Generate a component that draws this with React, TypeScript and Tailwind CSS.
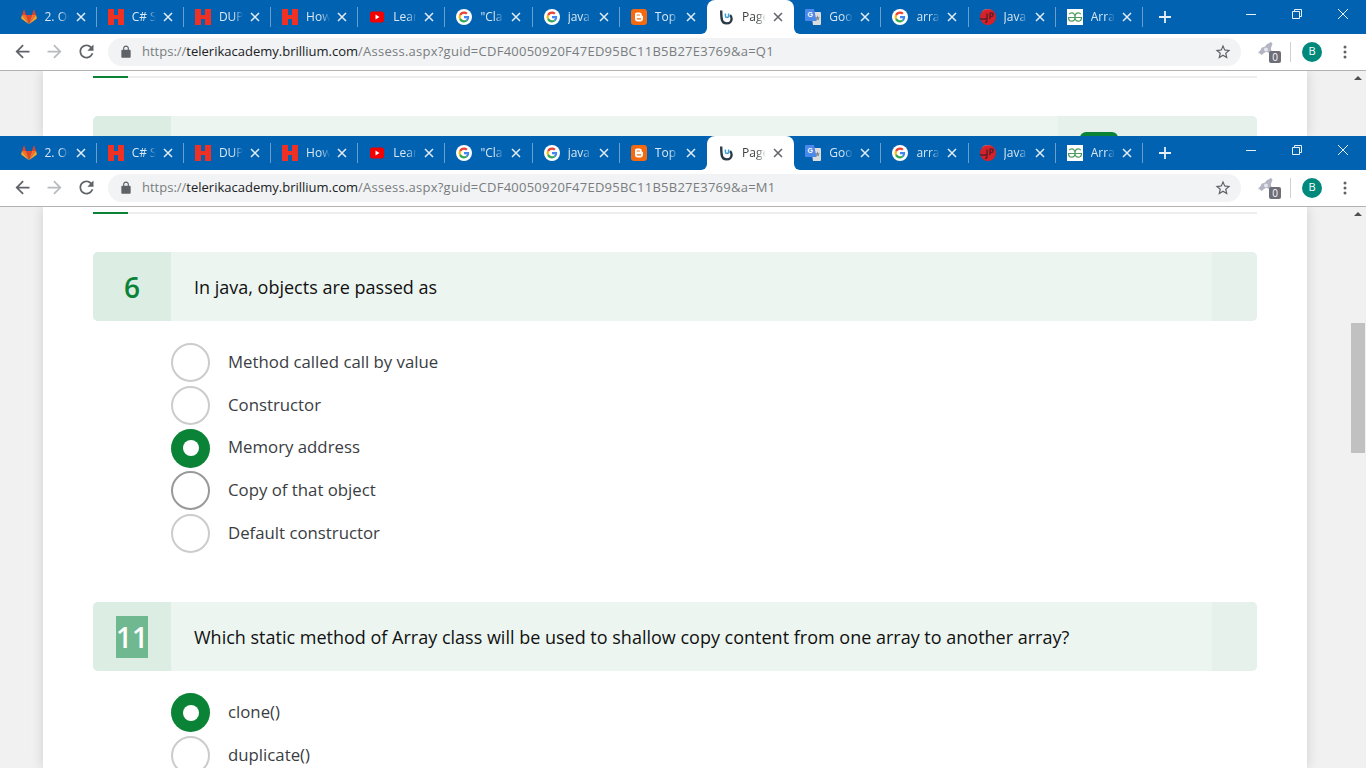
import type { ReactNode } from 'react';

type FaviconKind = 'gitlab' | 'h' | 'youtube' | 'google' | 'blogger' | 'brillium' | 'translate' | 'java' | 'gfg';

const tabs: { title: string; icon: FaviconKind; active?: boolean; noSep?: boolean }[] = [
  { title: '2. OC', icon: 'gitlab' },
  { title: 'C# S', icon: 'h' },
  { title: 'DUP', icon: 'h' },
  { title: 'How', icon: 'h' },
  { title: 'Lear', icon: 'youtube' },
  { title: '"Cla', icon: 'google' },
  { title: 'java', icon: 'google' },
  { title: 'Top', icon: 'blogger', noSep: true },
  { title: 'Page', icon: 'brillium', active: true, noSep: true },
  { title: 'Goo', icon: 'translate' },
  { title: 'arra', icon: 'google' },
  { title: 'Java', icon: 'java' },
  { title: 'Arra', icon: 'gfg' },
];

function Favicon({ kind }: { kind: FaviconKind }) {
  if (kind === 'gitlab') {
    return (
      <svg width="16" height="16" viewBox="0 0 16 16" className="shrink-0">
        <path d="M8 15.2 11 6H5z" fill="#e24329" />
        <path d="M8 15.2 5 6H1z" fill="#fc6d26" />
        <path d="M1 6 .2 9c-.1.3 0 .6.2.7L8 15.2z" fill="#fca326" />
        <path d="M1 6h4L3.3.8c-.1-.3-.4-.3-.5 0z" fill="#e24329" />
        <path d="M8 15.2 11 6h4z" fill="#fc6d26" />
        <path d="M15 6l.8 3c.1.3 0 .6-.2.7L8 15.2z" fill="#fca326" />
        <path d="M15 6h-4l1.7-5.2c.1-.3.4-.3.5 0z" fill="#e24329" />
      </svg>
    );
  }
  if (kind === 'h') {
    return (
      <svg width="16" height="16" viewBox="0 0 16 16" className="shrink-0">
        <path d="M0 0h6v6h4V0h6v16h-6V10H6v6H0z" fill="#ee3124" />
      </svg>
    );
  }
  if (kind === 'youtube') {
    return (
      <svg width="16" height="16" viewBox="0 0 16 16" className="shrink-0">
        <rect x="1" y="2.500" width="14" height="11" rx="2.500" fill="#f40000" />
        <path d="M6.500 5.500v5L10.500 8z" fill="#fff" />
      </svg>
    );
  }
  if (kind === 'google') {
    return (
      <svg width="16" height="16" viewBox="0 0 16 16" className="shrink-0">
        <circle cx="8" cy="8" r="8" fill="#fff" />
        <g transform="translate(2.600 2.600) scale(.225)">
          <path fill="#ea4335" d="M24 9.500c3.500 0 6.700 1.200 9.200 3.600l6.900-6.900C35.900 2.400 30.400 0 24 0 14.600 0 6.500 5.400 2.600 13.200l8 6.200C12.500 13.700 17.800 9.500 24 9.500z" />
          <path fill="#4285f4" d="M47 24.500c0-1.600-.100-3.100-.400-4.500H24v9h12.900c-.600 3-2.200 5.500-4.800 7.200l7.700 6C44.300 38 47 31.800 47 24.500z" />
          <path fill="#fbbc05" d="M10.500 28.600c-.500-1.400-.800-3-.800-4.600s.300-3.200.800-4.600l-8-6.200C.900 16.500 0 20.100 0 24s.900 7.500 2.600 10.800z" />
          <path fill="#34a853" d="M24 48c6.500 0 11.900-2.100 15.900-5.800l-7.700-6c-2.200 1.500-5 2.300-8.200 2.300-6.200 0-11.500-4.200-13.400-9.900l-8 6.200C6.500 42.600 14.600 48 24 48z" />
        </g>
      </svg>
    );
  }
  if (kind === 'blogger') {
    return (
      <svg width="16" height="16" viewBox="0 0 16 16" className="shrink-0">
        <rect width="16" height="16" rx="3" fill="#f5690f" />
        <path d="M5.800 3.500h2.700C10 3.500 10.800 4.500 10.800 6v.8c.8 0 1.200.4 1.200 1v2c0 1.500-1.100 2.700-2.600 2.700H6.500C5 12.500 4 11.400 4 10V5.300c0-1 .8-1.800 1.800-1.800z" fill="#fff" />
        <path d="M6.200 6h2.200M6.200 9.800h3.600" stroke="#f5690f" strokeWidth="1.200" strokeLinecap="round" />
      </svg>
    );
  }
  if (kind === 'brillium') {
    return (
      <svg width="16" height="16" viewBox="0 0 16 16" className="shrink-0">
        <path d="M3.200 1.500c0 3 .1 5 .4 8 .4 3 2.600 4.900 5.200 4.900 2.800 0 4.800-2 4.800-4.700 0-1.500-.6-2.700-1.600-3.600" fill="none" stroke="#2b3a45" strokeWidth="2.400" />
        <path d="M7.400 4.500v2.300c0 1 .7 1.800 1.600 1.800s1.600-.8 1.600-1.800V4.500" fill="none" stroke="#35a5dc" strokeWidth="1.500" />
      </svg>
    );
  }
  if (kind === 'translate') {
    return (
      <svg width="16" height="16" viewBox="0 0 16 16" className="shrink-0">
        <path d="M6 3h9a1 1 0 0 1 1 1v11a1 1 0 0 1-1 1H8z" fill="#dcdcdc" />
        <path d="M1 0h8l2.500 12H1a1 1 0 0 1-1-1V1a1 1 0 0 1 1-1z" fill="#4a88ea" />
        <text x="2.500" y="8" fontSize="7" fontWeight="700" fill="#fff" fontFamily="'Liberation Sans', sans-serif">G</text>
        <path d="M12.500 6.500l.8 1.700 1.700.2-1.300 1.200.4 1.800-1.600-.9-1.600.9.400-1.800-1.300-1.200 1.700-.2z" fill="#7d8794" />
      </svg>
    );
  }
  if (kind === 'java') {
    return (
      <svg width="16" height="16" viewBox="0 0 16 16" className="shrink-0">
        <circle cx="8" cy="8" r="8" fill="#d6202a" />
        <path d="M1 3.500A8 8 0 0 1 13 2 9 9 0 0 0 1 3.500z" fill="#ee7a7f" />
        <path d="M7 4.500v7.500c0 1-1 1.500-2 1.200M10 4v6M10 4h1.800c1 0 1.400.8 1.400 1.600S12.600 7.400 11.800 7.400H10M0 9.500c2 .8 5 .8 7-.1" fill="none" stroke="#5a1f25" strokeWidth="1.400" />
      </svg>
    );
  }
  return (
    <svg width="16" height="16" viewBox="0 0 16 16" className="shrink-0">
      <rect width="16" height="16" fill="#fff" />
      <path d="M8 8.500h6.500c0 2.300-1.500 3.700-3.200 3.700-1.900 0-3.300-1.800-3.300-4.200s1.400-4.200 3.300-4.200c1 0 1.900.5 2.500 1.300M8 8.500H1.500c0 2.300 1.500 3.700 3.200 3.700 1.900 0 3.300-1.800 3.300-4.200S6.600 3.800 4.700 3.800c-1 0-1.900.5-2.500 1.300" fill="none" stroke="#4e9a5e" strokeWidth="1.200" />
    </svg>
  );
}

function CloseX({ color }: { color: string }) {
  return (
    <svg width="10" height="10" viewBox="0 0 10 10" className="shrink-0">
      <path d="M1 1l8 8M9 1 1 9" stroke={color} strokeWidth="1.500" />
    </svg>
  );
}

function TabStrip() {
  return (
    <div className="flex h-[34px] bg-[#0062b1] pl-[9.5px]">
      {tabs.map((tab, index) => (
        <div
          key={index}
          className={`relative flex w-[87.2px] shrink-0 items-center ${tab.active ? 'rounded-t-lg bg-white' : ''}`}
        >
          {tab.active && (
            <>
              <span className="absolute bottom-0 -left-1.5 h-1.5 w-1.5 bg-white">
                <span className="block h-full w-full rounded-br-md bg-[#0062b1]" />
              </span>
              <span className="absolute -right-1.5 bottom-0 h-1.5 w-1.5 bg-white">
                <span className="block h-full w-full rounded-bl-md bg-[#0062b1]" />
              </span>
            </>
          )}
          <div className="flex flex-1 items-center pl-[11px]">
            <Favicon kind={tab.icon} />
            <span
              className={`ml-2 w-[24px] overflow-hidden whitespace-nowrap text-[12px] [mask-image:linear-gradient(to_right,black_60%,transparent_100%)] ${tab.active ? 'text-[#3c4043]' : 'text-[#d9e7f3]'}`}
            >
              {tab.title}
            </span>
            <span className="ml-[7px]">
              <CloseX color={tab.active ? '#5f6368' : '#e4edf6'} />
            </span>
          </div>
          {!tab.noSep && <span className="h-5 w-px bg-[#6b9fcb]" />}
        </div>
      ))}
      <div className="flex w-[44px] items-center justify-center">
        <svg width="12" height="12" viewBox="0 0 12 12">
          <path d="M6 0v12M0 6h12" stroke="#e8f0f7" strokeWidth="1.800" />
        </svg>
      </div>
      <div className="ml-auto flex h-7 items-center">
        <div className="flex w-[46px] justify-center">
          <svg width="10" height="10" viewBox="0 0 10 10">
            <path d="M0 5.500h10" stroke="#e8f0f7" />
          </svg>
        </div>
        <div className="flex w-[46px] justify-center">
          <svg width="10" height="10" viewBox="0 0 10 10">
            <path d="M.5 2.500h7v7h-7zM2.500 2.500v-2h7v7h-2" fill="none" stroke="#e8f0f7" />
          </svg>
        </div>
        <div className="flex w-[46px] justify-center">
          <svg width="10" height="10" viewBox="0 0 10 10">
            <path d="M0 0l10 10M10 0 0 10" stroke="#e8f0f7" />
          </svg>
        </div>
      </div>
    </div>
  );
}

function Toolbar({ query }: { query: string }) {
  return (
    <div className="flex h-[37px] items-center border-b border-[#b2b2b2] bg-white pb-px">
      <div className="flex w-[108px] items-center">
        <svg width="21" height="21" viewBox="0 0 24 24" className="ml-[11.5px]">
          <path d="M20 11H7.830l5.590-5.590L12 4l-8 8 8 8 1.410-1.410L7.830 13H20v-2z" fill="#5f6368" />
        </svg>
        <svg width="21" height="21" viewBox="0 0 24 24" className="ml-[11px] rotate-180">
          <path d="M20 11H7.830l5.590-5.590L12 4l-8 8 8 8 1.410-1.410L7.830 13H20v-2z" fill="#b9bbbd" />
        </svg>
        <svg width="21" height="21" viewBox="0 0 24 24" className="ml-[11px]">
          <path
            d="M17.650 6.350C16.200 4.900 14.210 4 12 4c-4.420 0-7.990 3.580-7.990 8s3.570 8 7.990 8c3.730 0 6.840-2.550 7.730-6h-2.080c-.820 2.330-3.040 4-5.650 4-3.310 0-6-2.690-6-6s2.690-6 6-6c1.660 0 3.140.690 4.220 1.780L13 11h7V4l-2.350 2.350z"
            fill="#5f6368"
          />
        </svg>
      </div>
      <div className="flex h-7 w-[1133px] items-center rounded-full bg-[#f1f3f4] pl-[11px] pr-[9px]">
        <svg width="14" height="14" viewBox="0 0 24 24">
          <path
            d="M18 8h-1V6c0-2.760-2.240-5-5-5S7 3.240 7 6v2H6c-1.100 0-2 .900-2 2v10c0 1.100.900 2 2 2h12c1.100 0 2-.900 2-2V10c0-1.100-.900-2-2-2zM9 6c0-1.660 1.340-3 3-3s3 1.340 3 3v2H9V6z"
            fill="#5f6368"
          />
        </svg>
        <span className="ml-[9px] whitespace-nowrap pt-px text-[13px] text-[#7a7d80]">
          https://<span className="text-[#202124]">telerikacademy.brillium.com</span>
          <span className="tracking-[0.25px]">/Assess.aspx?guid=CDF40050920F47ED95BC11B5B27E3769&amp;a={query}</span>
        </span>
        <svg width="18" height="18" viewBox="0 0 24 24" className="ml-auto">
          <path
            d="M22 9.240l-7.190-.620L12 2 9.190 8.630 2 9.240l5.460 4.730L5.820 21 12 17.270 18.180 21l-1.630-7.030L22 9.240zM12 15.400l-3.760 2.270 1-4.280-3.320-2.880 4.380-.380L12 6.100l1.710 4.040 4.380.380-3.320 2.880 1 4.280L12 15.400z"
            fill="#5f6368"
          />
        </svg>
      </div>
      <div className="relative ml-4 h-[22px] w-6">
        <svg width="17" height="17" viewBox="0 0 17 17">
          <path d="M1 11c1.500-.5 2.500-1.500 3-3 .4-1.200 1.500-2 3-2 1.200-.5 2-1.200 2.500-2.500L14 1l1.500 1.500L14 7c-.3 1.200.2 2.500 1 4l-2 1.500-3-1.500c-1.500 0-2.500.5-3.500 1.500L4.500 14z" fill="#b4b5c2" />
          <circle cx="9" cy="8.500" r="2" fill="#e6e6ec" />
        </svg>
        <span className="absolute bottom-0 right-0 flex h-3 w-3 items-center justify-center rounded-[2px] bg-[#6e6e78] text-[10px] leading-none text-white">
          0
        </span>
      </div>
      <span className="ml-[9px] h-5 w-px bg-[#d0d0d0]" />
      <span className="ml-[11px] flex h-5 w-5 items-center justify-center rounded-full bg-[#00897b] text-[11px] text-white">
        B
      </span>
      <svg width="4" height="14" viewBox="0 0 4 14" className="ml-[21px]">
        <circle cx="2" cy="2" r="1.500" fill="#5f6368" />
        <circle cx="2" cy="7" r="1.500" fill="#5f6368" />
        <circle cx="2" cy="12" r="1.500" fill="#5f6368" />
      </svg>
    </div>
  );
}

function Scrollbar({ thumb }: { thumb?: boolean }) {
  return (
    <div className="w-4 shrink-0 bg-[#f1f1f1]">
      <div className="flex h-4 items-center justify-center pb-[3px]">
        <div className="h-0 w-0 border-x-4 border-b-4 border-x-transparent border-b-[#505050]" />
      </div>
      {thumb && <div className="ml-px mt-[100px] h-[130px] w-[14px] bg-[#c1c1c1]" />}
    </div>
  );
}

function Radio({ state }: { state: 'off' | 'on' | 'hover' }) {
  if (state === 'on') {
    return (
      <span className="flex h-[39px] w-[39px] shrink-0 items-center justify-center rounded-full bg-[#0a8337]">
        <span className="h-4 w-4 rounded-full bg-white" />
      </span>
    );
  }
  return (
    <span
      className={`h-[39px] w-[39px] shrink-0 rounded-full border-2 ${state === 'hover' ? 'border-[#999999]' : 'border-[#cccccc]'}`}
    />
  );
}

function QuestionCard({ number, text, selected, right }: { number?: string; text?: string; selected?: boolean; right?: ReactNode }) {
  return (
    <div className="flex h-[69px] overflow-hidden rounded-[5px] bg-[#ecf5f0]">
      <div className="flex w-[78px] shrink-0 items-center justify-center bg-[#dcede4] text-[28px] font-semibold text-[#0a8337]">
        {selected ? <span className="bg-[#70b890] text-white">{number}</span> : number}
      </div>
      <div className="flex flex-1 items-center pl-[23px] pt-px text-[18px] text-[#111111]">{text}</div>
      {right}
    </div>
  );
}

function Option({ label, state = 'off' }: { label: string; state?: 'off' | 'on' | 'hover' }) {
  return (
    <div className="flex h-[42.75px] items-start">
      <Radio state={state} />
      <span className="ml-[18px] flex h-[39px] items-center pb-0.5 text-[16.8px] text-[#3a3d42]">{label}</span>
    </div>
  );
}

function Window({ query, height, thumb, children }: { query: string; height: string; thumb?: boolean; children: ReactNode }) {
  return (
    <div className={`flex flex-col overflow-hidden ${height}`}>
      <TabStrip />
      <Toolbar query={query} />
      <div className="flex min-h-0 flex-1">
        <div className="flex-1 overflow-hidden bg-[#f1f1f1] px-[43px]">
          <div className="h-full bg-white px-[50px] pt-[5px] shadow-[0_0_12px_rgba(0,0,0,0.14)]">
            <div className="h-0.5 bg-[#eeeeee]">
              <div className="h-full w-[35px] bg-[#0a8337]" />
            </div>
            {children}
          </div>
        </div>
        <Scrollbar thumb={thumb} />
      </div>
    </div>
  );
}

export default function App() {
  return (
    <div className="h-screen overflow-hidden bg-white font-['Open_Sans',sans-serif]">
      <Window query="Q1" height="h-[136px]">
        <div className="mt-[38px]">
          <QuestionCard
            right={
              <div className="w-[199px] bg-[#e6f1eb] pl-[22px] pt-4">
                <div className="h-8 w-[38px] rounded-md bg-[#0a8337]" />
              </div>
            }
          />
        </div>
      </Window>
      <Window query="M1" height="h-[632px]" thumb>
        <div className="mt-[38px]">
          <QuestionCard number="6" text="In java, objects are passed as" right={<div className="w-[45px] bg-[#e6f1eb]" />} />
          <div className="ml-[78px] mt-[22px]">
            <Option label="Method called call by value" />
            <Option label="Constructor" />
            <Option label="Memory address" state="on" />
            <Option label="Copy of that object" state="hover" />
            <Option label="Default constructor" />
          </div>
        </div>
        <div className="mt-[45.25px]">
          <QuestionCard
            number="11"
            selected
            text="Which static method of Array class will be used to shallow copy content from one array to another array?"
            right={<div className="w-[45px] bg-[#e6f1eb]" />}
          />
          <div className="ml-[78px] mt-[22px]">
            <Option label="clone()" state="on" />
            <Option label="duplicate()" />
          </div>
        </div>
      </Window>
    </div>
  );
}
